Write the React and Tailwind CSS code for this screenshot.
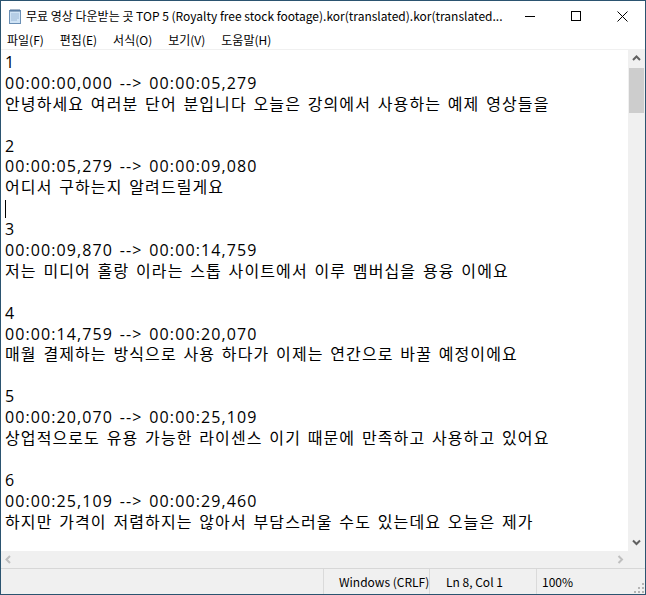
import { useState } from 'react'

const lines = [
  '1',
  '00:00:00,000 --> 00:00:05,279',
  '안녕하세요 여러분 단어 분입니다 오늘은 강의에서 사용하는 예제 영상들을',
  '',
  '2',
  '00:00:05,279 --> 00:00:09,080',
  '어디서 구하는지 알려드릴게요',
  null,
  '3',
  '00:00:09,870 --> 00:00:14,759',
  '저는 미디어 홀랑 이라는 스톱 사이트에서 이루 멤버십을 용융 이에요',
  '',
  '4',
  '00:00:14,759 --> 00:00:20,070',
  '매월 결제하는 방식으로 사용 하다가 이제는 연간으로 바꿀 예정이에요',
  '',
  '5',
  '00:00:20,070 --> 00:00:25,109',
  '상업적으로도 유용 가능한 라이센스 이기 때문에 만족하고 사용하고 있어요',
  '',
  '6',
  '00:00:25,109 --> 00:00:29,460',
  '하지만 가격이 저렴하지는 않아서 부담스러울 수도 있는데요 오늘은 제가',
  '',
]

const menus = ['파일(F)', '편집(E)', '서식(O)', '보기(V)', '도움말(H)']

function NotepadIcon() {
  return (
    <svg width="16" height="16" viewBox="0 0 16 16">
      <rect x="2.5" y="2.5" width="11" height="13" fill="#cfe3f5" stroke="#6a8fb5" />
      <path d="M4 6h8M4 8h8M4 10h8M4 12h6" stroke="#9bb8d6" strokeWidth="1" />
      <path d="M4 1v3M6 1v3M8 1v3M10 1v3M12 1v3" stroke="#4d6f94" strokeWidth="1" />
    </svg>
  )
}

function Chevron({ dir, color }) {
  const d = {
    up: 'M1 5 L4.5 1.5 L8 5',
    down: 'M1 1.5 L4.5 5 L8 1.5',
    left: 'M5 1 L1.5 4.5 L5 8',
    right: 'M1.5 1 L5 4.5 L1.5 8',
  }[dir]
  const vertical = dir === 'up' || dir === 'down'
  return (
    <svg width={vertical ? 9 : 7} height={vertical ? 7 : 9} viewBox={vertical ? '0 0 9 7' : '0 0 7 9'}>
      <path d={d} fill="none" stroke={color} strokeWidth="2" />
    </svg>
  )
}

export default function App() {
  const [text] = useState(lines)

  return (
    <div className="w-[646px] h-[595px] border border-[#2b5470] bg-white flex flex-col overflow-hidden font-['Noto_Sans_CJK_KR','Noto_Sans',sans-serif] text-black">
      {/* Title bar */}
      <div className="h-[30px] flex items-center shrink-0">
        <div className="pl-[6px] pr-[3px] flex items-center">
          <NotepadIcon />
        </div>
        <div className="flex-1 text-[12px] whitespace-nowrap overflow-hidden">
          무료 영상 다운받는 곳 TOP 5 (Royalty free stock footage).kor(translated).kor(translated...
        </div>
        <div className="flex h-full">
          <div className="w-[46px] h-full flex items-center justify-center">
            <div className="w-[10px] h-px bg-black" />
          </div>
          <div className="w-[46px] h-full flex items-center justify-center">
            <div className="w-[10px] h-[10px] border border-black" />
          </div>
          <div className="w-[46px] h-full flex items-center justify-center">
            <svg width="11" height="11" viewBox="0 0 11 11">
              <path d="M0.5 0.5 L10.5 10.5 M10.5 0.5 L0.5 10.5" stroke="#000" strokeWidth="1" />
            </svg>
          </div>
        </div>
      </div>

      {/* Menu bar */}
      <div className="h-[19px] flex items-center text-[12px] border-b border-[#f0f0f0] shrink-0 pl-[6px] gap-[16px]">
        {menus.map((m) => (
          <span key={m} className="leading-none">{m}</span>
        ))}
      </div>

      {/* Edit area */}
      <div className="flex h-[501px] shrink-0">
        <div className="flex-1 pl-[4px] pt-[2px] text-[16px] leading-[20.9px] whitespace-pre overflow-hidden font-['Open_Sans','Noto_Sans_CJK_KR',sans-serif] [word-spacing:1.5px] tracking-[1.1px]">
          {text.map((line, i) =>
            line === null ? (
              <div key={i} className="h-[20.9px] flex items-center">
                <div className="w-px h-[18px] bg-black" />
              </div>
            ) : (
              <div key={i} className="h-[20.9px]">{line}</div>
            )
          )}
        </div>
        <div className="w-[17px] bg-[#f0f0f0] flex flex-col items-center">
          <div className="h-[17px] flex items-center justify-center">
            <Chevron dir="up" color="#606060" />
          </div>
          <div className="w-[15px] h-[45px] bg-[#cdcdcd] mt-[1px]" />
          <div className="flex-1" />
          <div className="h-[17px] flex items-center justify-center">
            <Chevron dir="down" color="#606060" />
          </div>
        </div>
      </div>

      {/* Horizontal scrollbar */}
      <div className="h-[17px] flex bg-[#f0f0f0] shrink-0">
        <div className="flex-1 flex items-center justify-between px-[4px]">
          <Chevron dir="left" color="#bfbfbf" />
          <Chevron dir="right" color="#bfbfbf" />
        </div>
        <div className="w-[17px]" />
      </div>

      {/* Status bar */}
      <div className="flex-1 bg-[#f0f0f0] border-t border-[#d7d7d7] flex text-[12px] whitespace-nowrap relative">
        <div className="w-[322px]" />
        <div className="w-[106px] border-l border-[#dadada] pl-[15px] flex items-center">Windows (CRLF)</div>
        <div className="w-[107px] border-l border-[#dadada] pl-[16px] flex items-center">Ln 8, Col 1</div>
        <div className="flex-1 border-l border-[#dadada] pl-[5px] flex items-center">100%</div>
        <svg className="absolute right-[1px] bottom-[1px]" width="10" height="10" viewBox="0 0 10 10">
          <rect x="8" y="0" width="2" height="2" fill="#b5b5b5" />
          <rect x="4" y="4" width="2" height="2" fill="#b5b5b5" />
          <rect x="8" y="4" width="2" height="2" fill="#b5b5b5" />
          <rect x="0" y="8" width="2" height="2" fill="#b5b5b5" />
          <rect x="4" y="8" width="2" height="2" fill="#b5b5b5" />
          <rect x="8" y="8" width="2" height="2" fill="#b5b5b5" />
        </svg>
      </div>
    </div>
  )
}
